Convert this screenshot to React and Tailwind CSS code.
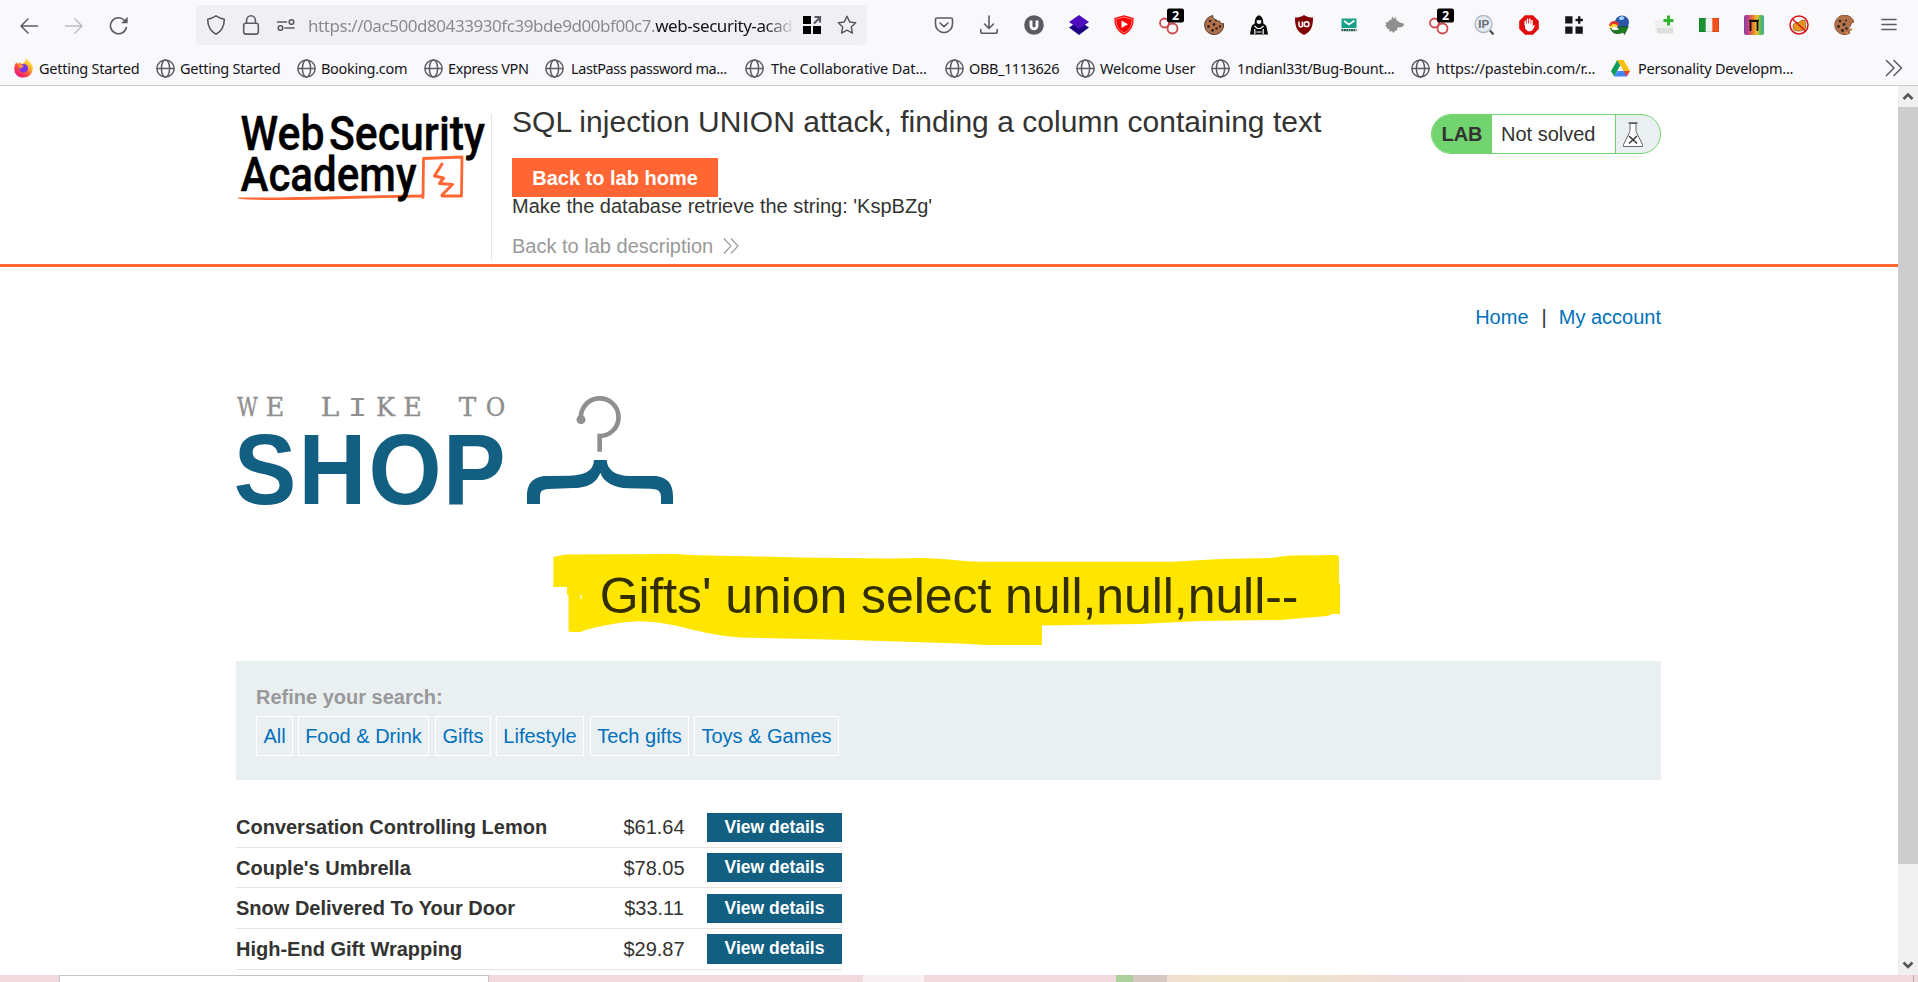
import React from "react";

const CHROME = "#5b5b66";

function Icon({ children, size = 20, className = "" }) {
  return (
    <svg width={size} height={size} viewBox="0 0 20 20" fill="none" className={`shrink-0 ${className}`}>
      {children}
    </svg>
  );
}

const line = { stroke: CHROME, strokeWidth: 1.6, strokeLinecap: "round", strokeLinejoin: "round" };

function Globe() {
  return (
    <svg width="19" height="19" viewBox="0 0 19 19" fill="none" stroke={CHROME} strokeWidth="1.5" className="shrink-0">
      <circle cx="9.5" cy="9.5" r="8.6" />
      <ellipse cx="9.5" cy="9.5" rx="4.1" ry="8.6" />
      <path d="M1 9.5H18" />
    </svg>
  );
}

function Firefox() {
  return (
    <svg width="19" height="20" viewBox="0 0 19 20" className="shrink-0">
      <defs>
        <linearGradient id="ff" x1="0.85" y1="0.05" x2="0.2" y2="0.95">
          <stop offset="0" stopColor="#fff44f" />
          <stop offset="0.35" stopColor="#ffb02a" />
          <stop offset="0.65" stopColor="#ff4a3f" />
          <stop offset="1" stopColor="#e31587" />
        </linearGradient>
      </defs>
      <path d="M12 0c1 2 5 4 6.500 8 1.200 6-2.500 11.500-9 11.500S-.3 15 .4 9.500C.6 7 1.500 5.500 2.500 4.200L3.300 6 5.500 4.500 8 6c1.500-1 3.200-1.500 3.200-3.200C11.200 1.500 12 .5 12 0z" fill="url(#ff)" />
      <circle cx="9.700" cy="10.300" r="4.300" fill="#7a35e8" />
      <path d="M4.500 7.500c2-1 3 .2 5.500.2-.5 1.500-2.500 1.200-2.800 2.600-.8.500-2.200-.6-2.700-2.800z" fill="#ff9a2e" />
    </svg>
  );
}

function Drive() {
  return (
    <svg width="19" height="17" viewBox="0 0 19 17" className="shrink-0">
      <path d="M6.300 0 3.200 5.500 0 11l3.200 5.600L9.400 5.400z" fill="#0f9d58" />
      <path d="M6.300 0h6.200l6.400 11h-6.300z" fill="#fbbc05" />
      <path d="M3.200 16.600 6.400 11h12.500l-3.100 5.600z" fill="#4285f4" />
      <path d="M12.600 11h6.300l-3.100 5.600z" fill="#ea4335" />
      <path d="M9.400 5.400 12.600 11H6.300z" fill="#f9f9fb" />
    </svg>
  );
}

function Linked() {
  return (
    <svg width="26" height="28" viewBox="0 0 26 28" fill="none" className="-mt-[8px] ml-[7px] shrink-0">
      <g stroke="#d0494d" strokeWidth="1.800">
        <circle cx="5.500" cy="16" r="4.500" />
        <circle cx="13.500" cy="21.500" r="5" />
        <path d="M9 19l1-1.500" />
      </g>
      <rect x="8" y="1.500" width="17" height="14" rx="2" fill="#000" />
      <text x="16.500" y="13" textAnchor="middle" fontFamily="Open Sans, sans-serif" fontWeight="700" fontSize="12.500" fill="#fff">2</text>
    </svg>
  );
}

function Cookie({ bitten }) {
  return (
    <Icon>
      <path
        d={bitten
          ? "M17 2.500A9.800 9.800 0 1 0 16 18l-1-2 1.500-1-2-2 2-2 1-3 2.500-1A9 9 0 0 0 17 2.500z"
          : "M9 .5a9.600 9.600 0 1 0 10.600 8 3 3 0 0 1-4-2.500 3.500 3.500 0 0 1-4-1.500C9 4 8.500 2 9 .5z"}
        fill="#b0714a" stroke={bitten ? "#7d4527" : "#3a2418"} strokeWidth="0.800"
      />
      <g fill="#33201a">
        <circle cx="6" cy="6" r="1.300" /><circle cx="4.500" cy="11.500" r="1.400" /><circle cx="10" cy="9.500" r="1.400" />
        <circle cx="8.500" cy="15.500" r="1.400" /><circle cx="12.500" cy="13.500" r="1.200" /><circle cx="12" cy="5.500" r="0.900" />
      </g>
      {bitten ? <path d="M15 14l3-1 .5 2-2 1zM12 17h2v2h-2z" fill="#d98a4a" /> : <circle cx="16" cy="11.500" r="1.200" fill="#33201a" />}
    </Icon>
  );
}

const extensions = [
  <Icon key="pocket"><path d="M3 3h14a1.500 1.500 0 0 1 1.500 1.500V9a8.500 8.500 0 0 1-17 0V4.500A1.500 1.500 0 0 1 3 3z" {...line} /><path d="M6 8l4 3.600L14 8" {...line} /></Icon>,
  <Icon key="download"><path d="M10 1v12M5.500 9l4.500 4.500L14.500 9M1.800 14.500V16.500a1.800 1.800 0 0 0 1.800 1.800h12.800a1.800 1.800 0 0 0 1.800-1.800v-2" {...line} /></Icon>,
  <Icon key="u"><circle cx="10" cy="10" r="9.800" fill="#5a5a63" /><path d="M7 5.500v5.300a3 3 0 0 0 6 0V5.500" stroke="#fff" strokeWidth="2.800" /></Icon>,
  <Icon key="layers"><path d="M0 12.500 10 6l10 6.500L10 20z" fill="#1d0080" /><path d="M0 7 10 0l10 7-10 7z" fill="#4d0bbd" /></Icon>,
  <Icon key="yt"><path d="M10 .3 19.600 3c.2 8-2.500 13.500-9.600 16.700C2.900 16.500.2 11 .4 3z" fill="#f00" /><path d="M10 2l7.900 2.200C18 10.500 15.800 15.200 10 18 4.200 15.200 2 10.500 2.100 4.200z" stroke="#ff9c9c" strokeWidth="0.800" /><path d="M7.500 5.500v7.500L14 9.200z" fill="#fff" /></Icon>,
  <Linked key="l1" />,
  <Cookie key="cookie" />,
  <Icon key="hood"><path d="M10 .3c2.500.7 4 3 4.200 6.200l.3 2.500c2 .6 3 1.500 3.300 4l1.300 6.500H.9L2.200 13c.3-2.500 1.300-3.400 3.300-4l.3-2.500C6 3.300 7.500 1 10 .3z" fill="#0b0b0b" /><path d="M7.500 5.500c1.500-.8 3.500-.8 5 0L12 8.300c-1.200.8-2.800.8-4 0z" fill="#eee" /><path d="M5.500 11l3 2.500h3l3-2.500M5.800 14v5M14.200 14v5M7.500 17h5" stroke="#fff" strokeWidth="1.200" /></Icon>,
  <Icon key="ub"><path d="M10 0c3 2 5.500 2.500 9 2.500 0 9-1.500 14-9 17.500C2.500 16.500 1 11.500 1 2.500 4.500 2.500 7 2 10 0z" fill="#800000" /><path d="M5 6.500v3.800a1.700 1.700 0 0 0 3.400 0V6.500M8.500 6.500v5.500" stroke="#fff" strokeWidth="1.500" /><circle cx="12.600" cy="9.200" r="2.400" stroke="#fff" strokeWidth="1.500" /></Icon>,
  <Icon key="mail"><path d="M2.500 3.500h15V13h-15z" fill="#16a18a" /><path d="M5 6l5 3.500L15.500 5.500" stroke="#fff" strokeWidth="1.600" /><path d="M2.500 15.200h15" stroke="#164d45" strokeWidth="2.200" strokeDasharray="1.800 .6" /></Icon>,
  <Icon key="wolf"><path d="M5.500 5 7.200 5 8.200 1.500 10 4 11.500 1.800 12.500 5.200 16 7.500 20 8.800 19.500 11 17 12.300 13.500 12.500 13 15.500 11 15.800 9.500 18 8 16.300 5 16.500 5.500 14.300 2.800 13.800 3.200 12.200 1 11 2.300 9.500 1.300 7.500 4 7.300z" fill="#8f8f8f" /></Icon>,
  <Linked key="l2" />,
  <Icon key="ip"><circle cx="9.500" cy="9" r="8.500" fill="#e5eaee" stroke="#aeb8c0" strokeWidth="1.300" /><path d="M16 15.500l3.500 4" stroke="#444" strokeWidth="2" /><text x="9.700" y="13.200" textAnchor="middle" fontFamily="Liberation Sans, sans-serif" fontWeight="700" fontSize="11.500" fill="#666b70">IP</text></Icon>,
  <Icon key="hand"><path d="M6 .2h8l5.800 5.800v8L14 19.800H6L.2 14V6z" fill="#e30b0b" /><path d="M6.300 10V6.300M8.500 9V4.300M10.800 9V4M13 9V5.500" stroke="#fff" strokeWidth="1.500" strokeLinecap="round" /><path d="M5.600 8.500h8.100v3l1.300-1.500 1 .6-2.500 4.600-2 1H9L6.300 14z" fill="#fff" /></Icon>,
  <Icon key="gridp"><path d="M1.200 1.200h7.300v7.300H1.200zM1.200 11.500h7.300v7.300H1.200zM11.500 11.500h7.300v7.300h-7.300z" fill="#15151c" /><path d="M15.200 1.300v7.400M11.500 5h7.400" stroke="#15151c" strokeWidth="2.300" /></Icon>,
  <Icon key="idm"><circle cx="13" cy="7.500" r="7" fill="#2a56a8" /><path d="M10 2.500 13 1l2.500 1.500-1.500 2.500-3.500 0z" fill="#9fd2f2" /><path d="M0 10C2 5 7 5 10.500 9l-2 2C5.500 8 3 9 1.500 12z" fill="#e5362c" /><path d="M1 12c2-4 5.500-3.500 8-1l-1.500 1.500C5 10.500 3 12 2.500 14z" fill="#f7d51e" /><path d="M1.500 13c1.500 3 5 3.200 9 1.500L9.500 12l9.800-.5-3.800 8-1.500-2.300c-5 2.600-11 2-12.500-4.200z" fill="#187d1b" stroke="#0b3e0d" strokeWidth=".6" /></Icon>,
  <Icon key="doc"><path d="M1 5h9v12H1z" fill="#efefef" /><path d="M3 7h16v11.500H3z" fill="#dedede" /><path d="M3 7h16v6H3z" fill="#f0f0f0" /><path d="M14.500.5v10M9.500 5.500h10" stroke="#35b52f" strokeWidth="3" /></Icon>,
  <Icon key="flag"><path d="M0 3h20v14H0z" fill="#f1f1ef" /><path d="M0 3h6.700v14H0z" fill="#199232" /><path d="M13.300 3H20v14h-6.700z" fill="#f4511e" /><path d="M.4 3.400h19.200v13.200H.4z" stroke="#000" strokeOpacity=".15" strokeWidth=".8" /></Icon>,
  <Icon key="rainbow">
    <defs><linearGradient id="rb"><stop offset="0" stopColor="#8143ad" /><stop offset=".22" stopColor="#c9447c" /><stop offset=".45" stopColor="#ee7e2f" /><stop offset=".65" stopColor="#e6c530" /><stop offset=".85" stopColor="#55b959" /><stop offset="1" stopColor="#38a7a0" /></linearGradient></defs>
    <rect width="20" height="20" rx="2" fill="url(#rb)" /><path d="M6.500 16V6h7v10" stroke="#111" strokeWidth="1.800" /><path d="M5 5.500h10" stroke="#111" strokeWidth="1.400" />
  </Icon>,
  <Icon key="nocat"><path d="M4 11c0-2.500 3-4 5.500-3.500L13 5l3 .5.500 3v5c-2 3-10 3.500-12 1z" fill="#e8951f" stroke="#7a4a10" strokeWidth=".6" /><circle cx="10" cy="10" r="9" stroke="#d81414" strokeWidth="1.500" /><path d="M3.500 4 16.500 16" stroke="#d81414" strokeWidth="1.500" /></Icon>,
  <Cookie key="cookie2" bitten />,
  <Icon key="menu"><path d="M3 4.500h14M3 9.500h14M3 14.500h14" {...line} /></Icon>,
];

const bookmarks = [
  [<Firefox key="f" />, "Getting Started", "w-[142px]", "gap-[6px] tracking-[-0.26px]"],
  [<Globe key="g" />, "Getting Started", "w-[141px]", "gap-[5px] tracking-[-0.26px]"],
  [<Globe key="g" />, "Booking.com", "w-[127px]", "gap-[5px] tracking-[-0.3px]"],
  [<Globe key="g" />, "Express VPN", "w-[121px]", "gap-[5px] tracking-[-0.37px]"],
  [<Globe key="g" />, "LastPass password ma...", "w-[200px]", "gap-[7px] tracking-[-0.42px]"],
  [<Globe key="g" />, "The Collaborative Dat...", "w-[200px]", "gap-[7px] tracking-[-0.09px]"],
  [<Globe key="g" />, "OBB_1113626", "w-[131px]", "gap-[5px] tracking-[-0.42px]"],
  [<Globe key="g" />, "Welcome User", "w-[135px]", "gap-[5px] tracking-[-0.24px]"],
  [<Globe key="g" />, "1ndianl33t/Bug-Bount...", "w-[200px]", "gap-[7px] tracking-[-0.24px]"],
  [<Globe key="g" />, "https://pastebin.com/r...", "w-[200px]", "gap-[6px] tracking-[-0.15px]"],
  [<Drive key="d" />, "Personality Developm...", "w-[200px]", "gap-[8px] tracking-[-0.22px]"],
];

function BrowserChrome() {
  return (
    <div className="h-[86px] shrink-0 border-b border-[#cccccc] bg-[#f9f9fb] font-['Noto_Sans',sans-serif]">
      <div className="flex h-[50px] items-center">
        <div className="flex w-[196px] pl-[19px] pt-px">
          <Icon><path d="M18.500 10H2M9 3l-7 7 7 7" {...line} strokeWidth="1.500" /></Icon>
          <Icon className="ml-[25px]"><path d="M1.500 10H18M11 3l7 7-7 7" {...line} strokeWidth="1.500" stroke="#bfbfc4" /></Icon>
          <Icon className="ml-[25px]"><path d="M17.300 11.500A8 8 0 1 1 15.500 4.500" {...line} /><path d="M18.700.800v6.500h-6.500z" fill={CHROME} /></Icon>
        </div>
        <div className="flex h-10 w-[671px] items-center rounded-[5px] bg-[#f0f0f4] pl-[10px]">
          <Icon><path d="M10 .9c2.800 1.900 5.400 2.800 8.300 3.300 0 6.800-2.800 12-8.300 15C4.500 16.200 1.700 11 1.700 4.200 4.600 3.700 7.200 2.800 10 .9z" {...line} /></Icon>
          <Icon className="ml-[15px]"><rect x="2.700" y="8.300" width="14.600" height="10.800" rx="2" {...line} /><path d="M5.600 8V5.200a4.400 4.400 0 0 1 8.800 0V8" {...line} /></Icon>
          <Icon className="ml-[15px]"><path d="M1.500 7h9M9 13h9" {...line} /><circle cx="15.500" cy="7" r="2.300" {...line} /><circle cx="4.500" cy="13" r="2.300" {...line} /></Icon>
          <div className="ml-[12px] mt-[2px] w-[486px] overflow-hidden whitespace-nowrap text-[17px] leading-[30px] tracking-[-0.44px] text-[#8a8a92] [mask-image:linear-gradient(to_right,#000_94%,transparent)]">
            https://0ac500d80433930fc39bde9d00bf00c7.<span className="text-[#15141a]">web-security-academy.net</span>
          </div>
          <Icon className="ml-[8px]"><path d="M1 1h8v8H1zM1 11h8v8H1zM11 11h8v8h-8z" fill="#000" /><path d="M12 8.500 17.500 3M12.500 2H18v5.500" stroke="#5b5b66" strokeWidth="2.200" /></Icon>
          <Icon className="ml-[15px]"><path d="M10 1.200l2.700 5.700 6 .8-4.400 4.300 1.100 6.200L10 15.200l-5.400 3 1.100-6.200L1.300 7.700l6-.8z" {...line} strokeWidth="1.500" /></Icon>
        </div>
        <div className="ml-[54px] flex">
          {extensions.map((e, i) => (
            <div key={i} className="flex h-5 w-[45px] items-center justify-center">{e}</div>
          ))}
        </div>
      </div>
      <div className="flex h-[35px] items-center pl-[14px] pr-[15px] pt-px">
        {bookmarks.map(([icon, label, width, spacing], i) => (
          <div key={i} className={`flex shrink-0 items-center ${width} ${spacing}`}>
            {icon}
            <span className="whitespace-nowrap text-[14.500px] leading-5 text-[#15141a]">{label}</span>
          </div>
        ))}
        <svg width="18" height="18" viewBox="0 0 18 18" fill="none" className="ml-auto">
          <path d="M1.500 1.500 9 9l-7.500 7.500M9 1.500 16.500 9 9 16.500" {...line} strokeWidth="1.500" />
        </svg>
      </div>
    </div>
  );
}

function AcademyLogo() {
  return (
    <svg width="255" height="110" viewBox="0 0 255 110" className="mt-[14px] shrink-0" fontFamily="Roboto, sans-serif" fontWeight="500" fontSize="48">
      <g fill="none" stroke="#ff6633" strokeLinecap="round" strokeLinejoin="round">
        <path d="M187 97.500 187.500 58.500 226 57 225.500 96 206 96" strokeWidth="2.800" />
        <path d="M206 64l-7.500 12 9 2-4 5.500 13 1-10.500 10.500" strokeWidth="3" />
      </g>
      <path d="M1 97.500c50 .5 100-1.500 187-3v3C110 98 50 102 4 99z" fill="#ff6633" />
      <g stroke="#000" strokeWidth=".4">
        <text x="4.500" y="50" textLength="84" lengthAdjust="spacingAndGlyphs">Web</text>
        <text x="93" y="50" textLength="156" lengthAdjust="spacingAndGlyphs">Security</text>
        <text x="4.500" y="91" textLength="176" lengthAdjust="spacingAndGlyphs">Academy</text>
      </g>
    </svg>
  );
}

function LabStatus() {
  return (
    <div className="mt-7 flex h-10 w-[230px] overflow-hidden rounded-[20px] border border-[#72d46e] bg-[#eaeff2]">
      <div className="flex w-[60px] items-center justify-center bg-[#72d46e] font-bold">LAB</div>
      <div className="flex w-[124px] items-center border-r border-[#72d46e] bg-white pl-[9px]">Not solved</div>
      <svg width="22" height="26" viewBox="0 0 22 26" className="ml-[6px] mt-[7px]" fill="none">
        <path d="M8 1.500v8L1.500 22.500v2h19v-2L14 9.500v-8z" fill="#fff" stroke="#666" />
        <path d="M6.500 1h9" stroke="#555" strokeWidth="1.500" />
        <path d="M7 14l8 7.500M15 14l-8 7.500" stroke="#333" strokeWidth="1.500" />
      </svg>
    </div>
  );
}

function LabHeader() {
  return (
    <header className="flex h-[181px] justify-between border-b-[3px] border-[#ff6633] pl-[236px] pr-[237px]">
      <div className="flex">
        <AcademyLogo />
        <div className="mt-7 h-[146px] w-px bg-[#e5e5e5]" />
        <div className="ml-[20px] pt-[18px]">
          <h2 className="whitespace-nowrap text-[30px] leading-[36px] tracking-[0.03px]">SQL injection UNION attack, finding a column containing text</h2>
          <button className="mt-[18px] block h-[39px] w-[206px] bg-[#ff6633] font-bold leading-[38px] text-white">Back to lab home</button>
          <p className="h-[18px] leading-[18px]">Make the database retrieve the string: 'KspBZg'</p>
          <a className="mt-[19px] flex items-center leading-6 text-[#999999]">
            Back to lab description
            <svg width="16" height="16" viewBox="0 0 16 16" fill="none" stroke="#999" strokeWidth="1.100" className="ml-[10px]">
              <path d="M1 .5 8 8l-7 7.500M8 .5 15 8l-7 7.500" />
            </svg>
          </a>
        </div>
      </div>
      <LabStatus />
    </header>
  );
}

function ShopLogo() {
  return (
    <svg width="480" height="140" viewBox="0 0 480 140" className="-ml-4 mt-[51px] block">
      <g fill="#8f8f8f" stroke="#8f8f8f" strokeWidth=".4" fontFamily="DejaVu Serif, serif" fontSize="25.500" textAnchor="middle">
        <text y="35.500" x="27.500" textLength="20.500" lengthAdjust="spacingAndGlyphs">W</text>
        <text y="35.500" x="55" textLength="18.500" lengthAdjust="spacingAndGlyphs">E</text>
        <text y="35.500" x="110" textLength="18.500" lengthAdjust="spacingAndGlyphs">L</text>
        <text y="35.500" x="137.500" textLength="19" lengthAdjust="spacingAndGlyphs" fontFamily="DejaVu Sans Mono, monospace" strokeWidth="0">I</text>
        <text y="35.500" x="165.500" textLength="19" lengthAdjust="spacingAndGlyphs">K</text>
        <text y="35.500" x="192.500" textLength="18.500" lengthAdjust="spacingAndGlyphs">E</text>
        <text y="35.500" x="247.500" textLength="17.500" lengthAdjust="spacingAndGlyphs">T</text>
        <text y="35.500" x="275.500" textLength="19.500" lengthAdjust="spacingAndGlyphs">O</text>
      </g>
      <g transform="scale(.93 1)" fill="#125f82" fontFamily="Liberation Sans, sans-serif" fontWeight="700" fontSize="101" textAnchor="middle">
        <text y="124.500" x="48.400 120.800 199 273.500">SHOP</text>
      </g>
      <g transform="scale(.33333)">
        <path d="M1139 215V168A56.500 56.500 0 1 0 1083 118" fill="none" stroke="#8f8f8f" strokeWidth="14" />
        <circle cx="1083" cy="119" r="13.500" fill="#8f8f8f" />
        <path d="M921 372V348C921 305 945 289 980 288L1050 287C1100 285 1120 270 1122 240H1160C1162 270 1185 287 1230 288H1300C1335 289 1359 305 1359 348V372H1323V350C1323 332 1312 327 1290 326L1225 325C1180 323 1150 305 1141 278C1130 305 1110 323 1060 324L985 327C965 328 960 335 960 350V372Z" fill="#125f82" />
      </g>
    </svg>
  );
}

const categories = [
  ["All", "w-[37px]"],
  ["Food & Drink", "w-[131px] ml-[5px]"],
  ["Gifts", "w-[56px] ml-[6px]"],
  ["Lifestyle", "w-[88px] ml-[5px]"],
  ["Tech gifts", "w-[99px] ml-[6px]"],
  ["Toys & Games", "w-[145px] ml-[5px]"],
];

const products = [
  ["Conversation Controlling Lemon", "$61.64", "h-[41px]", "mt-[6px] h-[29px]"],
  ["Couple's Umbrella", "$78.05", "h-[40px]", "mt-[5px] h-[29px]"],
  ["Snow Delivered To Your Door", "$33.11", "h-[41px]", "mt-[6px] h-[29px]"],
  ["High-End Gift Wrapping", "$29.87", "h-[41px]", "mt-[5px] h-[30px]"],
];

function Shop() {
  return (
    <div className="w-[1661px] pl-[236px]">
      <nav className="mt-[38px] flex justify-end leading-6 text-[#0071bc]">
        <a>Home</a>
        <span className="ml-[13px] mr-[12px] text-[#333332]">|</span>
        <a>My account</a>
      </nav>
      <ShopLogo />
      <section className="relative h-[141px] pt-[46px]">
        <svg width="800" height="100" viewBox="545 550 800 100" className="absolute left-[309px] top-[30px]">
          <path d="M553.300 557 565 554.500 675 554C700 556 750 556 800 557.500L890 558.500 925 558C950 559 965 561.500 980 561.700H1172L1220 559 1270 558 1290 555.500 1336 555Q1339 555 1339 558V583.500H1340V614H1332L1328 616 1280 620 1200 621 1140 624 1042 625.500V645H985L960 643.500 850 640 740 637.500C700 635 675 621.500 638 621.300 620 622 600 626 584 630.500L581 632H570Q568.500 632 568.500 630V595H567V587H553.300Z" fill="#ffe600" />
          <path d="M580.500 595h1.500v4h-1.500z" fill="#fffbe0" />
        </svg>
        <h1 className="relative pl-px text-center text-[50px] leading-[60px] tracking-[-0.08px] text-[#332e00]">Gifts' union select null,null,null--</h1>
      </section>
      <section className="h-[119px] bg-[#eaeff2] pl-5 pt-6">
        <p className="font-bold leading-6 text-[#999999]">Refine your search:</p>
        <div className="mt-[7px] flex text-[#0071bc]">
          {categories.map(([name, cls]) => (
            <a key={name} className={`flex h-10 items-center justify-center whitespace-nowrap border border-white ${cls}`}>{name}</a>
          ))}
        </div>
      </section>
      <section className="mt-[27px] w-[606px]">
        {products.map(([name, price, height, button]) => (
          <div key={name} className={`flex items-start border-b border-[#e4e4e4] ${height}`}>
            <span className="w-[374px] pt-[8px] font-bold leading-6">{name}</span>
            <span className="w-[88px] pt-[8px] text-center leading-6">{price}</span>
            <button className={`ml-auto w-[135px] bg-[#125f82] pb-[2px] text-[17.500px] font-bold leading-[26px] text-white ${button}`}>View details</button>
          </div>
        ))}
      </section>
    </div>
  );
}

function Scrollbar() {
  return (
    <div className="flex w-5 shrink-0 flex-col bg-[#f0f0f0]">
      <div className="flex h-[21px] items-center justify-center">
        <svg width="12" height="10" viewBox="0 0 12 10" fill="none" stroke="#555" strokeWidth="2.600"><path d="M1.500 7 6 2.500l4.500 4.500" /></svg>
      </div>
      <div className="h-[757px] bg-[#cdcdcd]" />
      <div className="mt-auto flex h-[21px] items-center justify-center">
        <svg width="12" height="10" viewBox="0 0 12 10" fill="none" stroke="#555" strokeWidth="2.600"><path d="M1.500 2.500 6 7l4.500-4.500" /></svg>
      </div>
    </div>
  );
}

export default function App() {
  return (
    <div className="flex h-[982px] w-[1918px] flex-col overflow-hidden bg-white font-['Liberation_Sans',Arial,sans-serif] text-[20px] text-[#333332]">
      <BrowserChrome />
      <div className="flex h-[889px] shrink-0">
        <main className="w-[1898px] overflow-hidden">
          <LabHeader />
          <Shop />
        </main>
        <Scrollbar />
      </div>
      <div className="flex h-[7px] shrink-0 bg-[#f0dadd]">
        <div className="w-[59px]" />
        <div className="w-[430px] border border-b-0 border-[#c4c4c4] bg-white" />
        <div className="w-[374px]" />
        <div className="w-[61px] bg-[#f8f0f2]" />
        <div className="w-[192px]" />
        <div className="w-[17px] bg-[#abd09c]" />
        <div className="w-[34px] bg-[#d6c8c0]" />
        <div className="w-[300px] bg-gradient-to-r from-[#f0dfd0] via-[#f1e6c8] via-25% to-[#eed9de]" />
        <div className="w-[447px] border-r border-[#b8a8ac]" />
      </div>
    </div>
  );
}
